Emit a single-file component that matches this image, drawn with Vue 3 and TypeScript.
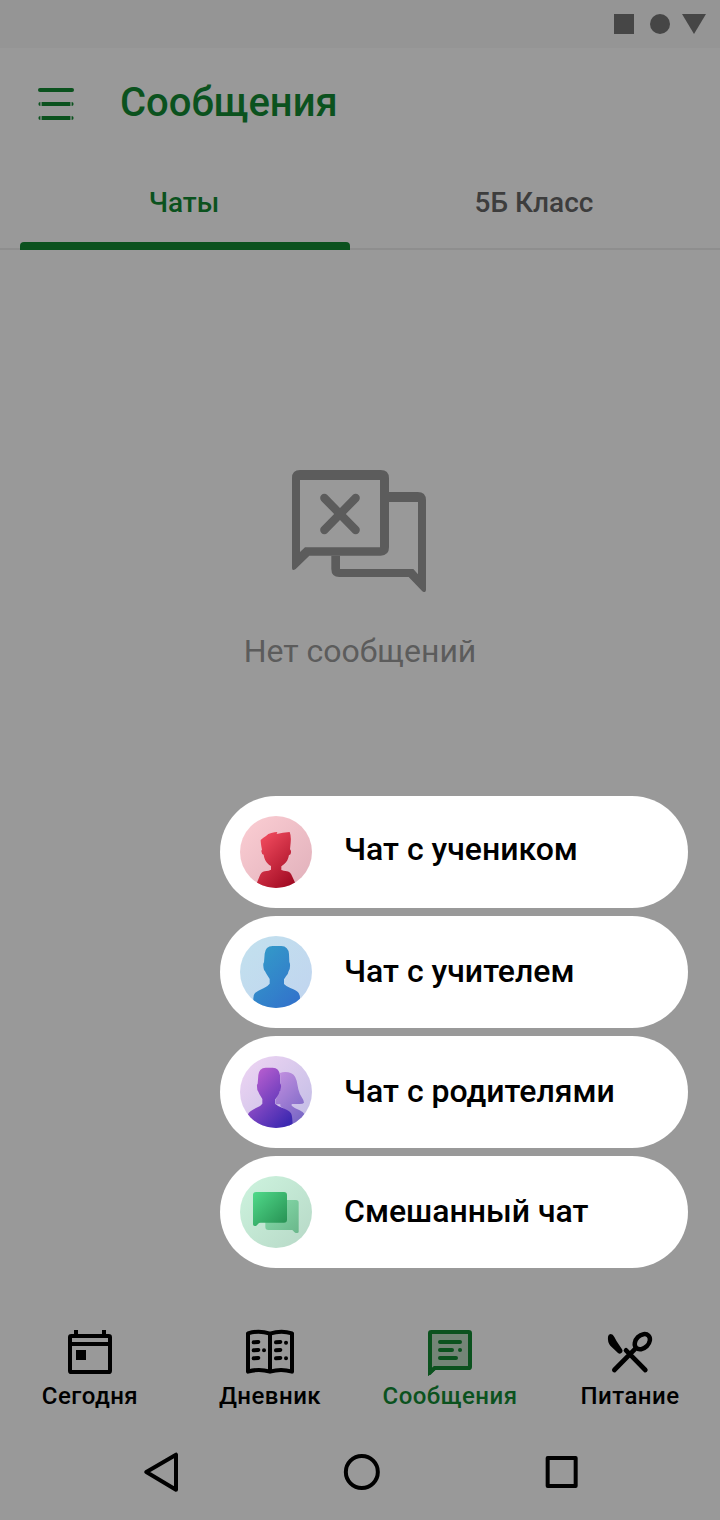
<script setup lang="ts">
import { ref } from 'vue'

type IconName = 'today' | 'diary' | 'messages' | 'food'
type ChatKind = 'student' | 'teacher' | 'parents' | 'mixed'

const tabs: string[] = ['Чаты', '5Б Класс']
const activeTab = ref<number>(0)

const chats: { kind: ChatKind; label: string }[] = [
  { kind: 'student', label: 'Чат с учеником' },
  { kind: 'teacher', label: 'Чат с учителем' },
  { kind: 'parents', label: 'Чат с родителями' },
  { kind: 'mixed', label: 'Смешанный чат' },
]

const navItems: { icon: IconName; label: string }[] = [
  { icon: 'today', label: 'Сегодня' },
  { icon: 'diary', label: 'Дневник' },
  { icon: 'messages', label: 'Сообщения' },
  { icon: 'food', label: 'Питание' },
]
const activeNav = ref<IconName>('messages')
</script>

<template>
  <div class="screen">
    <div class="status-bar">
      <svg width="92" height="20" viewBox="0 0 92 20" fill="#464646">
        <path d="M0 0h20v20H0z" />
        <circle cx="46" cy="10" r="10" />
        <path d="M68 0h24L80 20z" />
      </svg>
    </div>

    <header class="header">
      <svg class="burger" width="36" height="32" viewBox="0 0 36 32" fill="#0b521e">
        <rect width="36" height="4" rx="2" />
        <rect x="3.6" y="14" width="28.8" height="4" />
        <rect x="3.6" y="28" width="28.8" height="4" />
        <path d="M2.4 14v4a2 2 0 0 1 0-4zM33.6 14v4a2 2 0 0 0 0-4zM2.4 28v4a2 2 0 0 1 0-4zM33.6 28v4a2 2 0 0 0 0-4z" />
      </svg>
      <h1>Сообщения</h1>
    </header>

    <div class="tabs">
      <button
        v-for="(tab, i) in tabs"
        :key="tab"
        class="tab"
        :class="{ active: activeTab === i }"
        @click="activeTab = i"
      >
        <span class="tab-label">{{ tab }}</span>
        <span class="indicator"></span>
      </button>
    </div>

    <main class="empty">
      <svg width="134" height="122" viewBox="66 60 402 366" fill="#5c5c5c">
        <path
          fill-rule="evenodd"
          d="M66 84Q66 60 90 60H332Q357 60 357 85V292Q357 317 332 317H118L77 357Q66 364 66 354ZM90 90V306L105 292H330V90Z"
        />
        <path
          d="M357 126H443Q468 126 468 151V420Q467 430 457 424L416 381H208Q184 381 184 357V317H210V357H430L444 373V156H357Z"
        />
        <path d="M163 144L257 240M257 144L163 240" fill="none" stroke="#5c5c5c" stroke-width="25" stroke-linecap="round" />
      </svg>
      <p>Нет сообщений</p>
    </main>

    <div class="menu">
      <button v-for="chat in chats" :key="chat.kind" class="menu-item" :class="chat.kind">
        <svg v-if="chat.kind === 'student'" width="72" height="72" viewBox="60 78 216 216">
          <defs>
            <linearGradient id="s-bg" x1="0" y1="0" x2="1" y2="1">
              <stop offset=".1" stop-color="#f9cbd1" />
              <stop offset=".9" stop-color="#e3b3bd" />
            </linearGradient>
            <linearGradient id="s-fg" gradientUnits="userSpaceOnUse" x1="112" y1="153" x2="230" y2="271">
              <stop offset="0" stop-color="#f04a5d" />
              <stop offset="1" stop-color="#a00a22" />
            </linearGradient>
            <clipPath id="s-clip"><circle cx="168" cy="186" r="108" /></clipPath>
          </defs>
          <circle cx="168" cy="186" r="108" fill="url(#s-bg)" />
          <path
            clip-path="url(#s-clip)"
            fill="url(#s-fg)"
            d="M126 179C123 165 122 156 122 150Q130 143 138 138Q144 131 154 129Q164 126 172 126L170 132Q188 127 209 126Q214 138 212 158L210 178Q215 182 212 191Q211 195 207 195C205 207 200 217 192 223L184 229V240Q190 242 201 244Q212 246 216 258L226 280V300H108V285L119 258Q123 246 134 244Q148 243 153 239V228C142 221 133 211 131 194Q125 194 125 187Q123 181 126 179Z"
          />
        </svg>

        <svg v-else-if="chat.kind === 'teacher'" width="72" height="72" viewBox="60 63 216 216">
          <defs>
            <linearGradient id="t-bg" x1="0" y1="0" x2="1" y2="1">
              <stop offset=".15" stop-color="#c2dfee" />
              <stop offset=".85" stop-color="#c1d6ef" />
            </linearGradient>
            <linearGradient id="t-fg" gradientUnits="userSpaceOnUse" x1="110" y1="125" x2="235" y2="250">
              <stop offset="0" stop-color="#3398c9" />
              <stop offset="1" stop-color="#3274cb" />
            </linearGradient>
            <clipPath id="t-clip"><circle cx="168" cy="171" r="108" /></clipPath>
          </defs>
          <circle cx="168" cy="171" r="108" fill="url(#t-bg)" />
          <path
            clip-path="url(#t-clip)"
            fill="url(#t-fg)"
            d="M132 142L134 116Q136 94 158 93H184Q205 94 207 117L208 141Q211 146 210 154Q210 165 206 168Q205 176 198 184L192 193V207Q198 214 211 219Q231 226 236 234Q240 240 240 252V282H100V250Q100 239 105 234Q112 228 132 219Q143 214 149 206V192L140 178L135 169Q131 166 130 153Q129 145 132 142Z"
          />
        </svg>

        <svg v-else-if="chat.kind === 'parents'" width="72" height="72" viewBox="60 63 216 216">
          <defs>
            <linearGradient id="p-bg" x1="0" y1="0" x2="1" y2="1">
              <stop offset=".1" stop-color="#ebd3f2" />
              <stop offset=".9" stop-color="#c4bee6" />
            </linearGradient>
            <linearGradient id="p-fg" gradientUnits="userSpaceOnUse" x1="98" y1="130" x2="218" y2="250">
              <stop offset="0" stop-color="#b15bce" />
              <stop offset="1" stop-color="#3d29b1" />
            </linearGradient>
            <linearGradient id="p-back" gradientUnits="userSpaceOnUse" x1="160" y1="130" x2="270" y2="240">
              <stop offset="0" stop-color="#c08fdf" />
              <stop offset="1" stop-color="#7565c4" />
            </linearGradient>
            <clipPath id="p-clip"><circle cx="168" cy="171" r="108" /></clipPath>
          </defs>
          <circle cx="168" cy="171" r="108" fill="url(#p-bg)" />
          <g clip-path="url(#p-clip)">
            <path
              fill="url(#p-back)"
              d="M180 114Q192 109 205 112Q224 115 230 137L235 163Q238 177 247 190Q252 197 252 203Q249 207 239 207H215V212Q225 221 239 226Q248 230 256 240V285H210L190 220L181 214V208H168V192L183 160Z"
            />
            <path
              fill="url(#p-fg)"
              d="M113 146L115 120Q117 99 137 98H158Q178 99 180 121L181 145Q184 149 183 156Q182 168 179 169Q178 176 171 186L166 193V207Q172 213 188 219Q207 226 213 235Q218 243 218 283H84V238Q87 229 108 219Q122 214 127 206V192L118 177L115 170Q111 167 111 155Q110 148 113 146Z"
            />
          </g>
        </svg>

        <svg v-else width="72" height="72" viewBox="60 63 216 216">
          <defs>
            <linearGradient id="m-bg" x1="0" y1="0" x2="1" y2="1">
              <stop offset=".1" stop-color="#cbf1dc" />
              <stop offset=".9" stop-color="#b9dbc9" />
            </linearGradient>
            <linearGradient id="m-fg" x1="0" y1="0" x2="1" y2="1">
              <stop offset=".05" stop-color="#4ed687" />
              <stop offset=".9" stop-color="#2a9657" />
            </linearGradient>
            <linearGradient id="m-back" gradientUnits="userSpaceOnUse" x1="145" y1="140" x2="235" y2="235">
              <stop offset="0" stop-color="#86dbaa" />
              <stop offset="1" stop-color="#6ab78b" />
            </linearGradient>
          </defs>
          <circle cx="168" cy="171" r="108" fill="url(#m-bg)" />
          <path
            fill="url(#m-back)"
            d="M145 135H228Q236 135 236 143V231Q235 234 232 234H227Q224 234 218 226L216 225H145Q136 225 136 216V144Q136 135 145 135Z"
          />
          <path
            fill="url(#m-fg)"
            d="M108 111H192Q201 111 201 120V194Q201 203 192 203H122L117 204L109 212Q107 213 104 213Q99 213 99 208V120Q99 111 108 111Z"
          />
        </svg>
        <span>{{ chat.label }}</span>
      </button>
    </div>

    <nav class="bottom-nav">
      <button
        v-for="item in navItems"
        :key="item.icon"
        class="nav-item"
        :class="{ active: activeNav === item.icon }"
        @click="activeNav = item.icon"
      >
        <svg v-if="item.icon === 'today'" width="48" height="48" viewBox="108 39 144 144">
          <path d="M132 45h12v16h-12zM216 45h12v16h-12zM138 105h30v30h-30z" />
          <rect x="120" y="63" width="120" height="108" rx="4" fill="none" stroke="#000" stroke-width="12" />
          <path d="M118 81h124v12H118z" />
        </svg>

        <svg
          v-else-if="item.icon === 'diary'"
          width="48"
          height="48"
          viewBox="648 39 144 144"
          fill="none"
          stroke="#000"
          stroke-width="12"
        >
          <path d="M654 55Q687 45 720 56Q753 45 786 55V170Q753 160 720 170Q687 160 654 170Z" stroke-linejoin="round" />
          <path d="M720 52V174" />
          <path
            d="M671 82L685 81M671 106L685 105M671 130L685 129M738 82L751 81M738 106L751 105M738 130L751 129M702 106h.1M768 83h.1M768 130h.1"
            stroke-linecap="round"
          />
        </svg>

        <svg
          v-else-if="item.icon === 'messages'"
          width="48"
          height="48"
          viewBox="168 39 144 144"
          fill="none"
          stroke="#0b521e"
          stroke-width="12"
        >
          <path d="M180 55Q180 51 184 51H296Q300 51 300 55V155Q300 159 296 159H194L180 171Z" fill="#748577" />
          <path d="M174 160V176Q175 182 182 179L199 162Z" fill="#0b521e" stroke="none" />
          <path d="M210 81H270M210 105H246M270 105h.1M210 129H258" stroke-linecap="round" />
        </svg>

        <svg v-else width="48" height="48" viewBox="708 39 144 144">
          <path
            d="M714 65Q715 57 722 57Q729 57 733 66L740 79L756 103Q760 110 754 114Q749 118 744 114L721 92Q712 80 714 65Z"
          />
          <path
            d="M768 106L826 165M733 165L794 103"
            fill="none"
            stroke="#000"
            stroke-width="14"
            stroke-linecap="round"
          />
          <ellipse
            cx="817"
            cy="80"
            rx="26"
            ry="19"
            transform="rotate(-45 817 80)"
            fill="none"
            stroke="#000"
            stroke-width="13.5"
          />
        </svg>
        <span>{{ item.label }}</span>
      </button>
    </nav>

    <div class="system-nav">
      <svg width="40" height="40" viewBox="63 66 120 120">
        <path d="M79 126L168 74V179Z" stroke-linejoin="round" />
      </svg>
      <svg width="40" height="40" viewBox="666 66 120 120">
        <circle cx="725.5" cy="126" r="48" />
      </svg>
      <svg width="40" height="40" viewBox="1266 66 120 120">
        <rect x="1283" y="84" width="84" height="84" stroke-linejoin="round" />
      </svg>
    </div>
  </div>
</template>

<style>
body {
  margin: 0;
  background: #999;
}
</style>

<style scoped>
.screen {
  position: relative;
  display: flex;
  flex-direction: column;
  width: 720px;
  height: 1520px;
  overflow: hidden;
  background: #999;
  font-family: Roboto, 'Noto Sans', sans-serif;
  font-weight: 500;
}

svg {
  display: block;
  flex: none;
}

button {
  margin: 0;
  padding: 0;
  border: 0;
  background: none;
  color: inherit;
  font: inherit;
  cursor: pointer;
}

.status-bar {
  display: flex;
  align-items: center;
  justify-content: flex-end;
  box-sizing: border-box;
  height: 48px;
  padding-right: 14px;
  background: #959595;
}

.header {
  display: flex;
  align-items: center;
  gap: 46px;
  height: 112px;
  padding-left: 38px;
  color: #0b521e;
}

.header h1 {
  margin: 0 0 2px;
  font-size: 40px;
  line-height: 48px;
  font-weight: 500;
}

.tabs {
  display: grid;
  grid-template-columns: 330px 330px;
  column-gap: 20px;
  box-sizing: border-box;
  height: 90px;
  padding-left: 20px;
  box-shadow: inset 0 -2px #8e8e8e;
}

.tab {
  display: flex;
  flex-direction: column;
  align-items: center;
  justify-content: space-between;
  box-sizing: border-box;
  padding-top: 26px;
  font-size: 28px;
  line-height: 34px;
  color: #3d3d3d;
}

.tab-label {
  margin-right: 2px;
}

.indicator {
  width: 100%;
  height: 8px;
  border-radius: 4px 4px 0 0;
}

.tab.active {
  color: #0b521e;
}

.tab.active .indicator {
  background: #0b521e;
}

.empty {
  flex: 1;
  display: flex;
  flex-direction: column;
  align-items: center;
  padding-top: 220px;
}

.empty svg {
  margin-right: 2px;
}

.empty p {
  margin: 40px 0 0;
  font-size: 32px;
  line-height: 38px;
  font-weight: 400;
  color: #5c5c5c;
}

.menu {
  position: absolute;
  top: 796px;
  right: 32px;
  display: flex;
  flex-direction: column;
  gap: 8px;
  width: 468px;
}

.menu-item {
  display: flex;
  align-items: center;
  gap: 32px;
  box-sizing: border-box;
  height: 112px;
  padding-left: 20px;
  border-radius: 56px;
  background: #fff;
  color: #000;
  font-size: 32px;
  line-height: 38px;
  white-space: nowrap;
}

.menu-item span {
  margin-bottom: 2px;
}

.menu-item.student span {
  margin-bottom: 6px;
}

.bottom-nav {
  display: grid;
  grid-template-columns: repeat(4, 1fr);
  height: 96px;
}

.nav-item {
  display: flex;
  flex-direction: column;
  align-items: center;
  gap: 6px;
  font-size: 24px;
  line-height: 28px;
  letter-spacing: 0.48px;
  color: #000;
}

.nav-item.active {
  color: #0b521e;
}

.system-nav {
  display: flex;
  justify-content: space-between;
  box-sizing: border-box;
  height: 96px;
  padding: 28px 138px 0 141px;
  fill: none;
  stroke: #000;
  stroke-width: 12px;
}
</style>
